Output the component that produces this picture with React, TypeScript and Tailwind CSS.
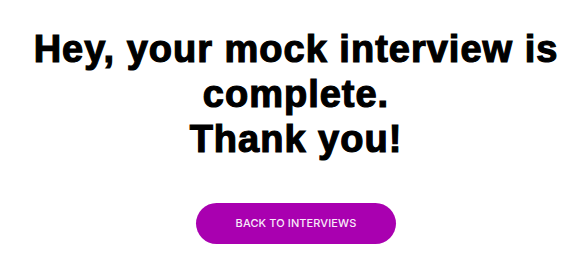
import React from "react";

export default function App() {
  return (
    <div className="w-[580px] h-[266px] bg-white flex flex-col items-center pt-[27px] pl-[12px]">
      <h1 className="text-center text-black font-bold text-[38px] leading-[45px] tracking-[1px] [-webkit-text-stroke:1.2px_black] font-['Liberation_Sans',Arial,sans-serif]">
        Hey, your mock interview is
        <br />
        complete.
        <br />
        Thank you!
      </h1>
      <button className="mt-[41px] w-[200px] h-[41px] rounded-full bg-[#a900b0] text-[#f8eaf9] text-[11px] font-medium uppercase tracking-[0.1px] font-['Inter','Noto_Sans',sans-serif]">
        Back to interviews
      </button>
    </div>
  );
}
